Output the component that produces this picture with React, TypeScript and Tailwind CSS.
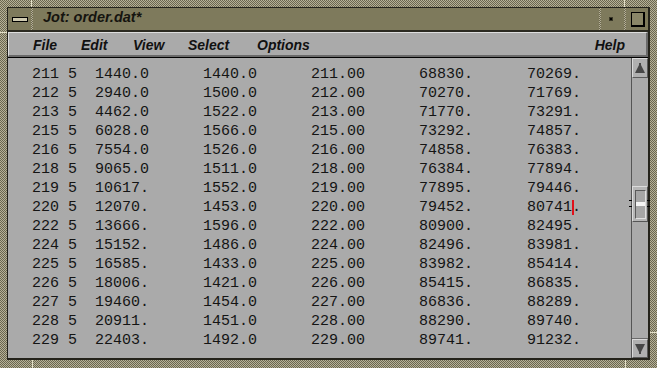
import React from "react";

const rows = [
  ["211", "5", "1440.0", "1440.0", "211.00", "68830.", "70269."],
  ["212", "5", "2940.0", "1500.0", "212.00", "70270.", "71769."],
  ["213", "5", "4462.0", "1522.0", "213.00", "71770.", "73291."],
  ["215", "5", "6028.0", "1566.0", "215.00", "73292.", "74857."],
  ["216", "5", "7554.0", "1526.0", "216.00", "74858.", "76383."],
  ["218", "5", "9065.0", "1511.0", "218.00", "76384.", "77894."],
  ["219", "5", "10617.", "1552.0", "219.00", "77895.", "79446."],
  ["220", "5", "12070.", "1453.0", "220.00", "79452.", "80741."],
  ["222", "5", "13666.", "1596.0", "222.00", "80900.", "82495."],
  ["224", "5", "15152.", "1486.0", "224.00", "82496.", "83981."],
  ["225", "5", "16585.", "1433.0", "225.00", "83982.", "85414."],
  ["226", "5", "18006.", "1421.0", "226.00", "85415.", "86835."],
  ["227", "5", "19460.", "1454.0", "227.00", "86836.", "88289."],
  ["228", "5", "20911.", "1451.0", "228.00", "88290.", "89740."],
  ["229", "5", "22403.", "1492.0", "229.00", "89741.", "91232."],
];

const stipple =
  "bg-[repeating-conic-gradient(#b6b197_0_25%,#6a664f_0_50%)] bg-[length:2px_2px]";

export default function App() {
  return (
    <div
      className={`relative w-[657px] h-[368px] pt-[7px] pl-[7px] pr-[7px] pb-[8px] ${stipple} font-['Liberation_Sans',Arial,sans-serif]`}
    >
      {/* resize corner marks */}
      <div className="absolute left-[31px] top-0 w-[1px] h-[7px] bg-[#e4e0c8]" />
      <div className="absolute left-[624px] top-0 w-[1px] h-[7px] bg-[#e4e0c8]" />
      <div className="absolute left-[32px] bottom-0 w-[1px] h-[8px] bg-[#e4e0c8]" />
      <div className="absolute left-[625px] bottom-0 w-[1px] h-[8px] bg-[#e4e0c8]" />
      <div className="absolute right-0 top-[332px] w-[7px] h-[1px] bg-[#e4e0c8]" />
      <div className="absolute left-0 top-[32px] w-[7px] h-[1px] bg-[#e4e0c8]" />

      <div className="h-full flex flex-col border-t border-l border-r-2 border-b-2 border-[#24231b]">
        <TitleBar />
        <div className="h-[2px] bg-[#2b2a21]" />
        <MenuBar />
        <div className="flex-1 flex min-h-0 border-t border-black">
          <TextArea />
          <ScrollBar />
        </div>
      </div>
    </div>
  );
}

function TitleBar() {
  return (
    <div className="h-[22px] flex bg-[#7e7a5c]">
      <div className="w-[23px] flex items-center justify-center">
        <div className="w-[16px] h-[5px] border border-black bg-[#cfcab0]" />
      </div>
      <div className={`w-[2px] ${stipple}`} />
      <div className="flex-1 flex items-center pl-[10px] pb-[3px] text-[14.5px] italic font-bold text-[#15140f]">
        Jot: order.dat*
      </div>
      <div className={`w-[2px] ${stipple}`} />
      <div className="w-[23px] flex items-center justify-center pr-[3px]">
        <div className="w-[4px] h-[4px] bg-black border border-[#3a3828]" />
      </div>
      <div className={`w-[2px] ${stipple}`} />
      <div className="w-[22px] flex items-center justify-center pl-[1px]">
        <div className="w-[14px] h-[15px] border border-black border-r-2 border-b-2 bg-[#8a8668]" />
      </div>
    </div>
  );
}

function MenuBar() {
  return (
    <div className="h-[25px] flex items-center pt-[3px] pl-[24px] bg-[#aaaaaa] border-t border-l border-[#dedede] border-r-2 border-b-2 border-r-[#6a6a6a] border-b-[#6a6a6a] text-[14px] italic font-bold text-[#111111]">
      <span className="w-[48px]">File</span>
      <span className="w-[52px]">Edit</span>
      <span className="w-[55px]">View</span>
      <span className="w-[69px]">Select</span>
      <span>Options</span>
      <span className="ml-auto mr-[21px]">Help</span>
    </div>
  );
}

function TextArea() {
  return (
    <div className="flex-1 bg-[#aaaaaa] pl-[24px] pt-[7px] font-['Liberation_Mono',monospace] text-[15px] leading-[19px] text-[#141414] whitespace-pre">
      {rows.map((r, i) => (
        <div key={r[0]} className="flex">
          <span className="w-[36px]">{r[0]}</span>
          <span className="w-[27px]">{r[1]}</span>
          <span className="w-[108px]">{r[2]}</span>
          <span className="w-[108px]">{r[3]}</span>
          <span className="w-[108px]">{r[4]}</span>
          <span className="w-[108px]">{r[5]}</span>
          {i === 7 ? (
            <span className="flex items-center">
              80741
              <span className="inline-block w-[2px] h-[15px] -mr-[2px] bg-[#e0101a]" />
              .
            </span>
          ) : (
            <span>{r[6]}</span>
          )}
        </div>
      ))}
    </div>
  );
}

function ScrollBar() {
  return (
    <div className="w-[17px] flex flex-col border-l border-[#555555] bg-[#aaaaaa]">
      <div className="h-[20px] flex items-center justify-center bg-[#b0b0b0] border-t border-l border-[#dadada] border-r border-b border-r-[#5a5a5a] border-b-[#5a5a5a]">
        <svg width="10" height="10" viewBox="0 0 10 10">
          <polygon points="4,0 6,0 6,2 10,10 0,10 4,2" fill="#474747" />
        </svg>
      </div>
      <div className="flex-1 border-b border-[#6a6a6a]">
        <div className="relative mt-[108px] h-[36px] flex items-center justify-center bg-[#b6b6b6] border-t border-l border-[#dcdcdc] border-r border-b border-r-[#555555] border-b-[#555555]">
          <div className="w-[11px] h-[29px] flex flex-col justify-center border border-t-[#5a5a5a] border-l-[#5a5a5a] border-r-[#e0e0e0] border-b-[#e0e0e0] bg-[#a6a6a6]">
            <div className="h-[4px] bg-[#f4f4f4]" />
          </div>
          <div className="absolute -left-[4px] top-[13px] w-[3px] h-[1px] bg-black" />
          <div className="absolute -left-[4px] top-[19px] w-[3px] h-[1px] bg-black" />
          <div className="absolute -right-[3px] top-[13px] w-[3px] h-[1px] bg-black" />
          <div className="absolute -right-[3px] top-[19px] w-[3px] h-[1px] bg-black" />
        </div>
      </div>
      <div className="h-[19px] flex items-center justify-center bg-[#b0b0b0] border-t border-l border-[#dadada] border-r border-b border-r-[#5a5a5a] border-b-[#5a5a5a]">
        <svg width="10" height="10" viewBox="0 0 10 10">
          <polygon points="0,0 10,0 6,8 6,10 4,10 4,8" fill="#474747" />
        </svg>
      </div>
    </div>
  );
}
